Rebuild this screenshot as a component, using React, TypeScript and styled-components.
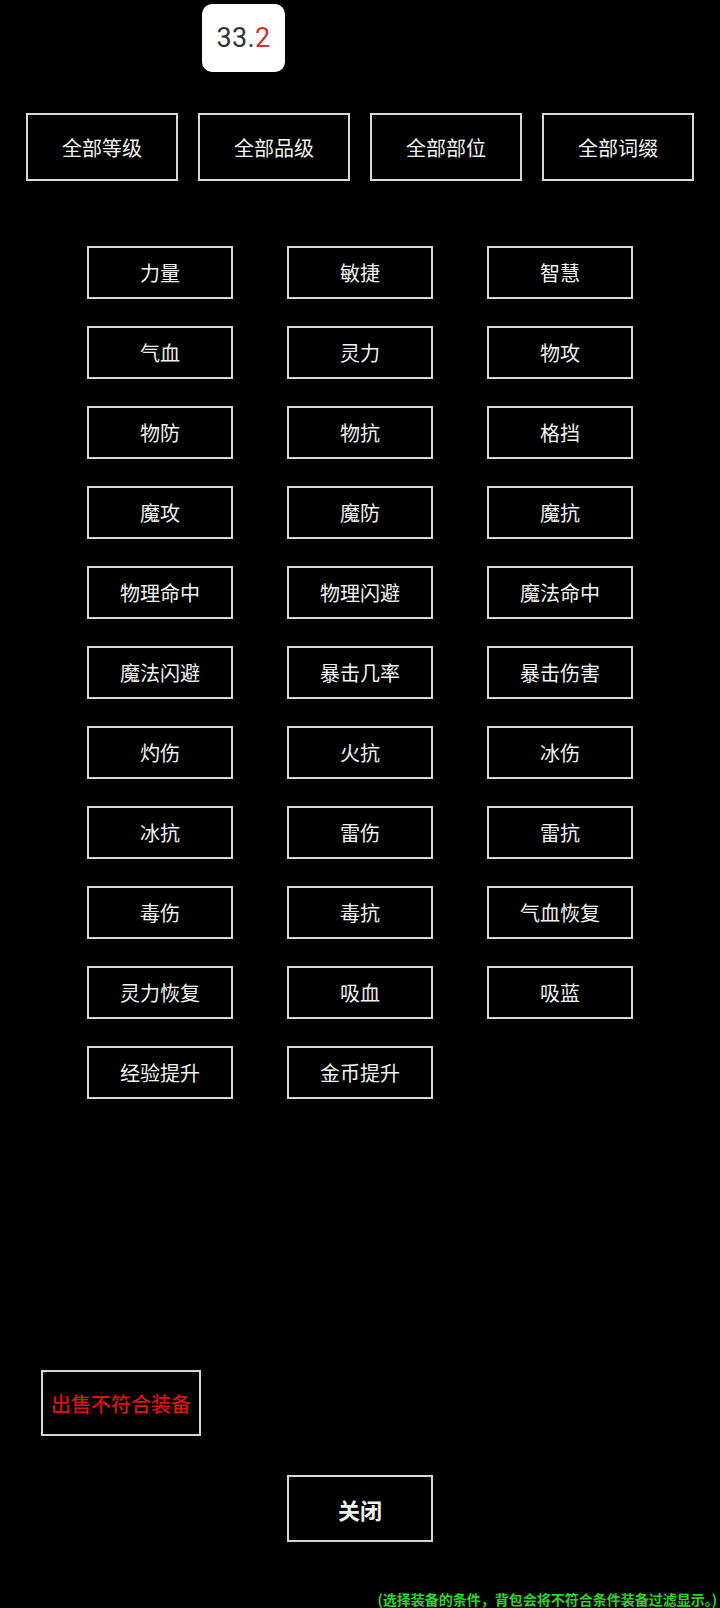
import React from 'react';
import styled, { createGlobalStyle } from 'styled-components';

const GlobalStyle = createGlobalStyle`
  html, body {
    margin: 0;
    padding: 0;
    background: #000;
  }
  body {
    font-family: "Noto Sans CJK SC", "Noto Sans", sans-serif;
  }
`;

const Page = styled.div`
  width: 720px;
  height: 1608px;
  background: #000;
  display: flex;
  flex-direction: column;
  overflow: hidden;
`;

const BadgeRow = styled.div`
  padding-top: 4px;
  padding-left: 202px;
`;

const Badge = styled.div`
  width: 83px;
  height: 68px;
  background: #fff;
  border-radius: 10px;
  display: flex;
  align-items: center;
  justify-content: center;
  font-family: Roboto, "Liberation Sans", sans-serif;
  font-size: 27px;
  color: #333;
  letter-spacing: 0.3px;
`;

const Red = styled.span`
  color: #d32f2f;
`;

const FilterRow = styled.div`
  margin-top: 41px;
  padding-left: 26px;
  display: flex;
  gap: 20px;
`;

const BoxButton = styled.div<{ $w: number; $h: number; $color?: string; $size?: number; $weight?: number }>`
  box-sizing: border-box;
  width: ${p => p.$w}px;
  height: ${p => p.$h}px;
  border: 2px solid #d6d6d6;
  display: flex;
  align-items: center;
  justify-content: center;
  color: ${p => p.$color || '#f2f2f2'};
  font-size: ${p => p.$size || 20}px;
  font-weight: ${p => p.$weight || 400};
  cursor: pointer;
`;

const StatGrid = styled.div`
  margin-top: 65px;
  display: grid;
  grid-template-columns: repeat(3, 146px);
  grid-auto-rows: 53px;
  column-gap: 54px;
  row-gap: 27px;
  justify-content: center;
`;

const SellRow = styled.div`
  margin-top: 271px;
  padding-left: 41px;
`;

const CloseRow = styled.div`
  margin-top: 39px;
  display: flex;
  justify-content: center;
`;

const Hint = styled.div`
  margin-top: auto;
  padding-right: 3px;
  text-align: right;
  color: #2ad62a;
  font-size: 14px;
  font-weight: 700;
  line-height: 18px;
  white-space: nowrap;
`;

const filters = ['全部等级', '全部品级', '全部部位', '全部词缀'];

const stats = [
  '力量', '敏捷', '智慧',
  '气血', '灵力', '物攻',
  '物防', '物抗', '格挡',
  '魔攻', '魔防', '魔抗',
  '物理命中', '物理闪避', '魔法命中',
  '魔法闪避', '暴击几率', '暴击伤害',
  '灼伤', '火抗', '冰伤',
  '冰抗', '雷伤', '雷抗',
  '毒伤', '毒抗', '气血恢复',
  '灵力恢复', '吸血', '吸蓝',
  '经验提升', '金币提升',
];

export default function App() {
  return (
    <>
      <GlobalStyle />
      <Page>
        <BadgeRow>
          <Badge>
            33.<Red>2</Red>
          </Badge>
        </BadgeRow>
        <FilterRow>
          {filters.map(f => (
            <BoxButton key={f} $w={152} $h={68}>{f}</BoxButton>
          ))}
        </FilterRow>
        <StatGrid>
          {stats.map(s => (
            <BoxButton key={s} $w={146} $h={53}>{s}</BoxButton>
          ))}
        </StatGrid>
        <SellRow>
          <BoxButton $w={160} $h={66} $color="#dd1111" $size={20} $weight={500}>出售不符合装备</BoxButton>
        </SellRow>
        <CloseRow>
          <BoxButton $w={146} $h={67} $size={22} $weight={700}>关闭</BoxButton>
        </CloseRow>
        <Hint>(选择装备的条件，背包会将不符合条件装备过滤显示。)</Hint>
      </Page>
    </>
  );
}
